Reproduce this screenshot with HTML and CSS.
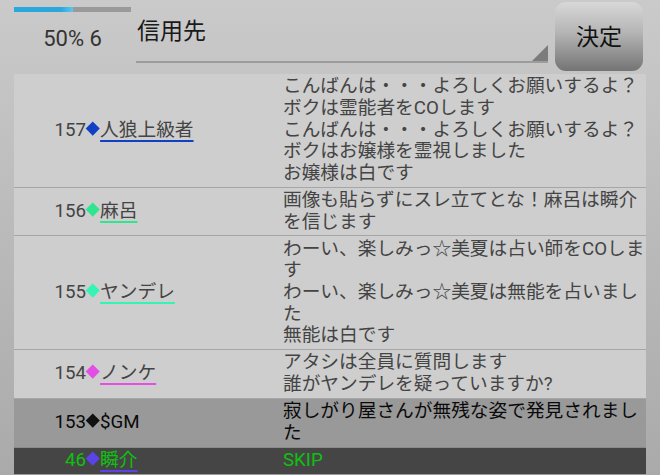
FILE: index.html
```
<!DOCTYPE html>
<html lang="ja">
<head>
<meta charset="utf-8">
<link rel="stylesheet" href="styles.css">
</head>
<body>
<div class="page">
  <header class="top">
    <div class="status">
      <div class="progress"><div class="progress-fill" style="width:50%"></div></div>
      <div class="percent">50% 6</div>
    </div>
    <div class="spinner">
      <span class="spinner-text">信用先</span>
      <span class="spinner-arrow"></span>
    </div>
    <button class="decide">決定</button>
  </header>
  <div class="log">
    <div class="row">
      <div class="who"><span class="num">157</span><span class="dia c-blue"></span><span class="name u-blue">人狼上級者</span></div>
      <div class="msg">こんばんは・・・よろしくお願いするよ？<br>ボクは霊能者をCOします<br>こんばんは・・・よろしくお願いするよ？<br>ボクはお嬢様を霊視しました<br>お嬢様は白です</div>
    </div>
    <div class="row">
      <div class="who"><span class="num">156</span><span class="dia c-green"></span><span class="name u-green">麻呂</span></div>
      <div class="msg">画像も貼らずにスレ立てとな！麻呂は瞬介を信じます</div>
    </div>
    <div class="row">
      <div class="who"><span class="num">155</span><span class="dia c-teal"></span><span class="name u-teal">ヤンデレ</span></div>
      <div class="msg">わーい、楽しみっ☆美夏は占い師をCOします<br>わーい、楽しみっ☆美夏は無能を占いました<br>無能は白です</div>
    </div>
    <div class="row">
      <div class="who"><span class="num">154</span><span class="dia c-pink"></span><span class="name u-pink">ノンケ</span></div>
      <div class="msg">アタシは全員に質問します<br>誰がヤンデレを疑っていますか?</div>
    </div>
    <div class="row row-gm">
      <div class="who"><span class="num">153</span><span class="dia c-black"></span><span class="name">$GM</span></div>
      <div class="msg">寂しがり屋さんが無残な姿で発見されました</div>
    </div>
    <div class="row row-skip">
      <div class="who"><span class="num">46</span><span class="dia c-violet"></span><span class="name u-violet">瞬介</span></div>
      <div class="msg">SKIP</div>
    </div>
    <div class="row row-next"></div>
  </div>
</div>
</body>
</html>
```
FILE: styles.css
```
html, body {
  margin: 0;
  padding: 0;
}
body {
  width: 660px;
  height: 475px;
  overflow: hidden;
  font-family: Roboto, "Noto Sans CJK JP", sans-serif;
  background: linear-gradient(#cacaca, #aaaaaa);
}
.page {
  width: 660px;
  height: 475px;
  overflow: hidden;
}
.top {
  display: flex;
  height: 74px;
  padding-left: 14px;
}
.status {
  width: 117px;
  display: flex;
  flex-direction: column;
}
.progress {
  margin-top: 7px;
  height: 5px;
  background: #9a9a9a;
}
.progress-fill {
  height: 100%;
  background: linear-gradient(to right, #2aa8dc 80%, #5cc8f0);
}
.percent {
  margin-top: 14px;
  font-size: 22px;
  line-height: 25px;
  color: #333;
  text-align: center;
}
.spinner {
  margin-left: 5px;
  width: 412px;
  height: 61px;
  border-bottom: 2px solid #9c9c9c;
  display: flex;
  align-items: flex-start;
  justify-content: space-between;
}
.spinner-text {
  margin-top: 14px;
  margin-left: 1px;
  font-family: "Noto Sans CJK JP", sans-serif;
  font-size: 23px;
  line-height: 30px;
  color: #1a1a1a;
}
.spinner-arrow {
  align-self: flex-end;
  width: 0;
  height: 0;
  border-left: 16px solid transparent;
  border-bottom: 16px solid #7c7c7c;
}
.decide {
  margin-left: 7px;
  margin-top: 2px;
  width: 88px;
  height: 69px;
  border: none;
  border-radius: 11px;
  background: linear-gradient(#d8d8d8, #b4b4b4 45%, #747474);
  font-family: "Noto Sans CJK JP", sans-serif;
  font-size: 23px;
  color: #111;
  padding: 0 0 4px 0;
}
.log {
  margin-left: 14px;
  width: 632px;
}
.row {
  display: grid;
  grid-template-columns: 269px 1fr;
  align-items: center;
  background: #cecece;
  border-bottom: 1px solid #a6a6a6;
  color: #444;
  font-size: 18.7px;
  line-height: 21.67px;
}
.who {
  display: flex;
  align-items: baseline;
  white-space: nowrap;
}
.num {
  display: inline-block;
  width: 72px;
  text-align: right;
}
.dia {
  display: inline-block;
  width: 9.5px;
  height: 9.5px;
  margin: 0 2.3px;
  transform: translateY(-2.5px) rotate(45deg);
  align-self: center;
}
.name {
  text-decoration-line: underline;
  text-decoration-thickness: 2px;
  text-underline-offset: 4px;
}
.msg {
  align-self: start;
  padding: 2.2px 0;
}
.c-blue { background: #1240c4; }
.c-green { background: #2ee690; }
.c-teal { background: #34f4b4; }
.c-pink { background: #e44ee4; }
.c-black { background: #111; }
.c-violet { background: #5a44e6; }
.u-blue { text-decoration-color: #1240c4; }
.u-green { text-decoration-color: #2ee690; }
.u-teal { text-decoration-color: #34f4b4; }
.u-pink { text-decoration-color: #e44ee4; }
.u-violet { text-decoration-color: #5a44e6; }
.row-gm {
  background: #999999;
  color: #0a0a0a;
  border-bottom-color: #8a8a8a;
}
.row-gm .name {
  text-decoration: none;
}
.row-skip {
  background: #454545;
  color: #10c010;
  border-bottom: 1px solid #9a9a9a;
}
.row-next {
  height: 30px;
}
```
